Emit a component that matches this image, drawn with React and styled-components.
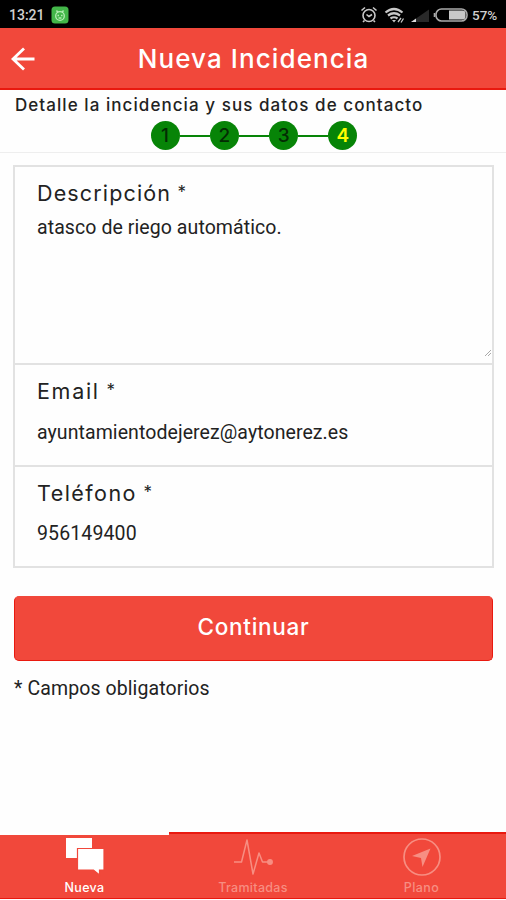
import React from "react";
import styled, { createGlobalStyle } from "styled-components";

const steps = [1, 2, 3, 4];

export default function App() {
  return (
    <Page>
      <GlobalStyle />
      <StatusBar>
        <Clock>13:21</Clock>
        <AppBadge />
        <Spacer />
        <StatusIcons />
        <Battery>57%</Battery>
      </StatusBar>

      <Header>
        <BackButton aria-label="Volver">
          <svg width="24" height="24" viewBox="0 0 24 24" fill="none" stroke="#fff" strokeWidth="2.8">
            <path d="M13 1.500 2 12l11 10.500M2 12h21.500" />
          </svg>
        </BackButton>
        <Title>Nueva Incidencia</Title>
      </Header>

      <Intro>
        <IntroText>Detalle la incidencia y sus datos de contacto</IntroText>
        <Steps>
          {steps.map((n) => (
            <React.Fragment key={n}>
              {n > 1 && <StepLine />}
              <Step $active={n === 4}>{n}</Step>
            </React.Fragment>
          ))}
        </Steps>
      </Intro>

      <Form>
        <Field $height="198px">
          <Label $spacing="1.15px">Descripción <Star>*</Star></Label>
          <Value $gap="2px" $spacing="0.08px">atasco de riego automático.</Value>
          <Grip width="8" height="8" viewBox="0 0 8 8">
            <path d="M1 7 7 1M4 7 7 4" stroke="#aaa" fill="none" />
          </Grip>
        </Field>
        <Field $height="102px">
          <Label $spacing="1.7px">Email <Star>*</Star></Label>
          <Value $gap="9px" $spacing="0.08px">ayuntamientodejerez@aytonerez.es</Value>
        </Field>
        <Field $height="101px">
          <Label $spacing="1.45px">Teléfono <Star>*</Star></Label>
          <Value $gap="8px" $spacing="0.12px">956149400</Value>
        </Field>
      </Form>

      <Continue>Continuar</Continue>
      <Note>* Campos obligatorios</Note>

      <Tabs>
        <Tab $active>
          <svg width="40" height="40" viewBox="0 0 40 40">
            <path d="M1 0h26v20H1z" fill="#fff" />
            <path d="M12.500 10.500h26.500v21.500h-4.500v5l-6-5h-16z" fill="#fff" stroke="#f1483b" strokeWidth="1.200" />
          </svg>
          <TabLabel>Nueva</TabLabel>
        </Tab>
        <Tab>
          <svg width="40" height="40" viewBox="0 0 40 40" fill="none" stroke="#f78e82" strokeWidth="1.500">
            <path d="M1 24h7.500l5.500-22 6 34 6-21 3.500 9h7" strokeLinejoin="round" />
            <circle cx="37" cy="24" r="2.200" fill="#f78e82" />
          </svg>
          <TabLabel>Tramitadas</TabLabel>
        </Tab>
        <Tab>
          <svg width="40" height="40" viewBox="0 0 40 40" fill="none" stroke="#f78e82" strokeWidth="1.700">
            <circle cx="20" cy="19" r="18" />
            <path d="M28.500 10.500 10 18l9 2 1.500 9z" fill="#f78e82" stroke="none" />
          </svg>
          <TabLabel $spacing="0.4px">Plano</TabLabel>
        </Tab>
      </Tabs>
    </Page>
  );
}

const AppBadge = () => (
  <svg width="18" height="18" viewBox="0 0 18 18">
    <rect x="0.500" y="0.500" width="17" height="17" rx="3.500" fill="#43b649" />
    <g fill="none" stroke="#b5edb4" strokeWidth="1.300">
      <circle cx="9" cy="10" r="4.300" />
      <path d="M5.500 4.500 7 6.500M12.500 4.500 11 6.500M6.500 9.500h1.500M10 9.500h1.500M7.500 12h3" />
    </g>
  </svg>
);

// alarm, wifi, signal and battery
const StatusIcons = () => (
  <svg width="110" height="18" viewBox="0 0 110 18" fill="none" stroke="#c8c8c8" strokeWidth="1.600">
    <circle cx="10" cy="9.500" r="6" />
    <path d="M2.500 4.500 6 1.500M17.500 4.500 14 1.500M7.500 8.500l2.500 2 3-2M5.500 14.500 4 16M14.500 14.500l1.500 1.500" />
    <path d="M26.500 6.500Q35 -.5 43.500 6.500M29 9.500q6-4.500 12 0M31.500 12.500q3.500-2.500 7 0" strokeWidth="2.200" />
    <path d="m33 14 2 2.500 2-2.500z" fill="#c8c8c8" stroke="none" />
    <path d="m39 16 3-4M42 16.500l2.500-4" strokeWidth="1.300" />
    <path d="M52 16h18v-12.500z" fill="#292929" stroke="none" />
    <path d="M52 16h5v-3.500z" fill="#ddd" stroke="none" />
    <rect x="77" y="3" width="31" height="12" rx="5.500" stroke="#aaa" />
    <path d="M90 4.500h13.500q3 0 3 3v3q0 3-3 3H90z" fill="#c8c8c8" stroke="none" />
    <path d="M75.500 7v4" stroke="#aaa" />
  </svg>
);

const GlobalStyle = createGlobalStyle`
  * {
    box-sizing: border-box;
  }
  body {
    margin: 0;
    background: #fff;
  }
`;
const Page = styled.div`
  display: flex;
  flex-direction: column;
  width: 506px;
  height: 900px;
  padding-bottom: 1px;
  font-family: Roboto, sans-serif;
  color: #222;
  background: #fefefe;
  overflow: hidden;
`;
const StatusBar = styled.div`
  display: flex;
  align-items: center;
  flex: none;
  height: 28px;
  padding: 1px 8px 0 9px;
  background: #000;
  color: #d0d0d0;
`;
const Clock = styled.span`
  width: 42px;
  font-size: 14px;
  font-weight: 500;
`;
const Spacer = styled.div`
  flex: 1;
`;
const Battery = styled.span`
  width: 26px;
  margin-left: 3px;
  font-size: 13.5px;
  font-weight: 500;
`;
const Header = styled.header`
  display: grid;
  grid-template-columns: 46px 1fr 46px;
  align-items: center;
  flex: none;
  height: 62px;
  background: #f1483b;
  border-bottom: 2px solid #e9190f;
`;
const BackButton = styled.button`
  display: flex;
  padding: 2px 0 0 11px;
  border: none;
  background: none;
`;
const Title = styled.h1`
  margin: 1px 0 0;
  padding-left: 1px;
  font-family: Inter, sans-serif;
  font-size: 26px;
  font-weight: 500;
  letter-spacing: 1.1px;
  line-height: 32px;
  text-align: center;
  color: #fff;
`;
const Intro = styled.section`
  flex: none;
  height: 63px;
  padding-top: 4px;
  border-bottom: 1px solid #eee;
`;
const IntroText = styled.p`
  margin: 0 0 5px 15px;
  font-family: Inter, sans-serif;
  font-size: 17px;
  font-weight: 500;
  letter-spacing: 1.06px;
  line-height: 22px;
  white-space: nowrap;
`;
const Steps = styled.div`
  display: flex;
  align-items: center;
  justify-content: center;
  padding-left: 2px;
`;
const Step = styled.span`
  width: 29px;
  height: 29px;
  border-radius: 50%;
  background: #078407;
  color: ${(p) => (p.$active ? "#ff0" : "#032c03")};
  font-family: Inter, sans-serif;
  font-size: 19px;
  font-weight: ${(p) => (p.$active ? 600 : 500)};
  line-height: 29px;
  text-align: center;
`;
const StepLine = styled.span`
  width: 30.3px;
  height: 2px;
  background: #078407;
`;
const Form = styled.form`
  flex: none;
  margin: 12px 12px 0 13px;
  border: 2px solid #e2e2e2;
  border-bottom: none;
`;
const Field = styled.div`
  position: relative;
  height: ${(p) => p.$height};
  padding: 10px 22px 0;
  border-bottom: 2px solid #e2e2e2;
`;
const Label = styled.label`
  display: block;
  font-family: Inter, sans-serif;
  font-size: 21.5px;
  letter-spacing: ${(p) => p.$spacing};
  word-spacing: -1px;
  line-height: 32px;
`;
const Star = styled.span`
  font-size: 17px;
  line-height: 1;
  vertical-align: 3px;
`;
const Value = styled.div`
  margin-top: ${(p) => p.$gap};
  font-size: 19.5px;
  letter-spacing: ${(p) => p.$spacing};
  line-height: 34px;
`;
const Grip = styled.svg`
  position: absolute;
  right: 0;
  bottom: 6px;
`;
const Continue = styled.button`
  flex: none;
  height: 65px;
  margin: 28px 13px 0 14px;
  padding: 0 0 4px;
  border: 1px solid #e9190f;
  border-top-color: #f1483b;
  border-radius: 5px;
  background: #f1483b;
  color: #fff;
  font-family: Inter, sans-serif;
  font-size: 22.5px;
  font-weight: 500;
  letter-spacing: 0.7px;
`;
const Note = styled.p`
  margin: 15px 14px 0;
  font-size: 19.5px;
  letter-spacing: 0.1px;
  line-height: 26px;
`;
const Tabs = styled.nav`
  display: grid;
  grid-template-columns: 169px 168px 169px;
  flex: none;
  height: 67px;
  margin-top: auto;
  background: #f1483b;
  border-bottom: 1px solid #e9190f;
`;
const Tab = styled.div`
  display: flex;
  flex-direction: column;
  align-items: center;
  border-top: ${(p) => (p.$active ? "3px solid #fff" : "2px solid #e9190f")};
  padding-top: ${(p) => (p.$active ? "3px" : "4px")};
  color: ${(p) => (p.$active ? "#fff" : "#f78e82")};
`;
const TabLabel = styled.span`
  margin-top: 1px;
  font-family: Inter, sans-serif;
  font-size: 12.5px;
  font-weight: 500;
  letter-spacing: ${(p) => p.$spacing || "0.3px"};
  line-height: 18px;
`;
